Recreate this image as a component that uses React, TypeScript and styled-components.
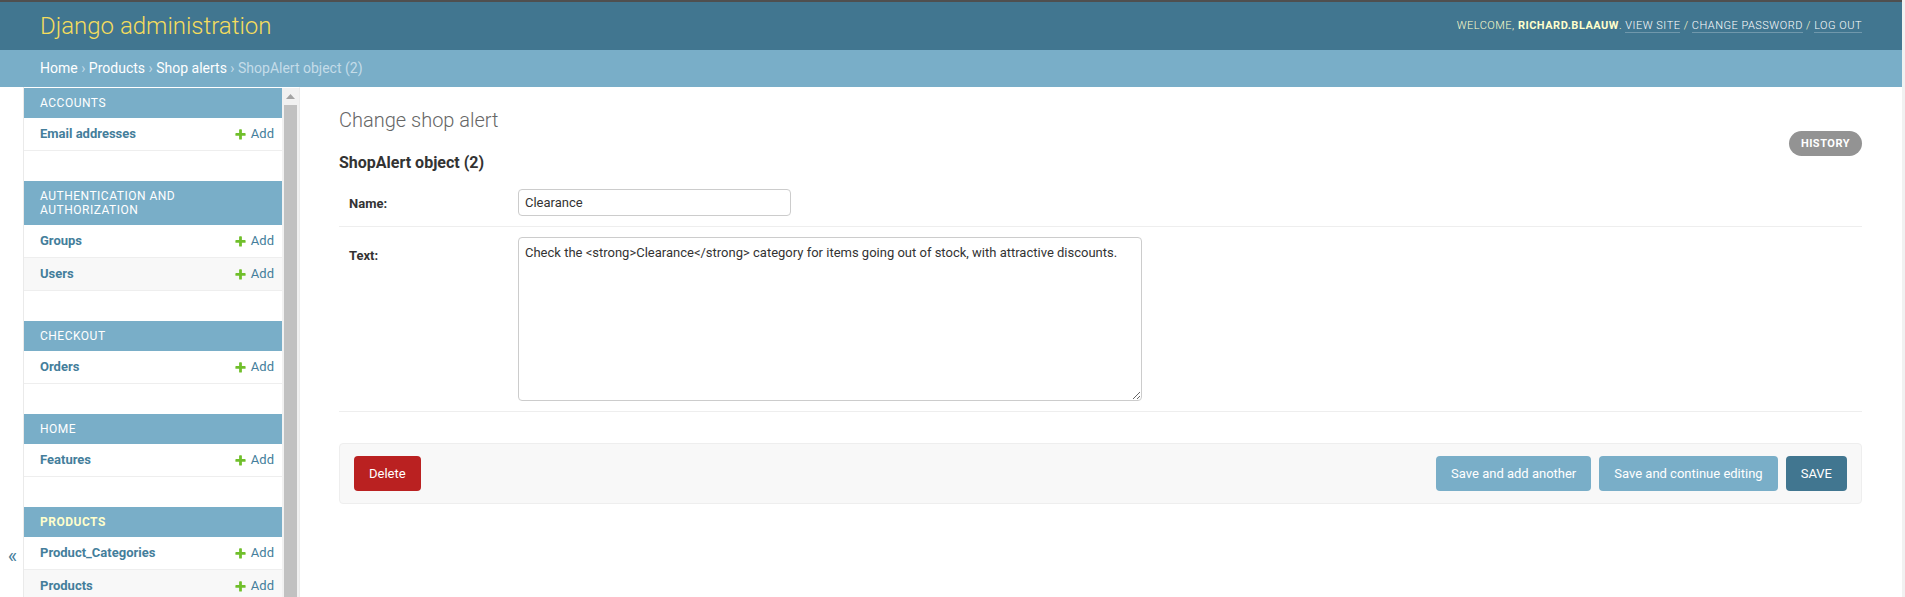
import React from "react";
import styled, { createGlobalStyle } from "styled-components";

const GlobalStyle = createGlobalStyle`
  html, body {
    margin: 0;
    padding: 0;
  }
  body {
    font-family: Roboto, "Liberation Sans", Arial, sans-serif;
    color: #333;
    background: #fff;
    font-size: 14px;
    overflow: hidden;
  }
  * {
    box-sizing: border-box;
  }
`;

const Page = styled.div`
  height: 597px;
  overflow: hidden;
  border-right: 3px solid #f1f1f1;
`;

const Header = styled.div`
  height: 50px;
  border-top: 2px solid #4f4f4f;
  background: #417690;
  padding: 0 40px;
  display: flex;
  align-items: center;
  justify-content: space-between;
`;

const Branding = styled.h1`
  margin: 0;
  font-size: 24px;
  line-height: 30px;
  font-weight: 300;
  color: #f5dd5d;
`;

const UserTools = styled.div`
  font-size: 11px;
  letter-spacing: 0.5px;
  text-transform: uppercase;
  font-weight: 300;
  color: #ffc;
  margin-top: -2px;

  strong {
    font-weight: 700;
  }
`;

const ToolLink = styled.a`
  color: #fff;
  text-decoration: none;
  border-bottom: 1px solid rgba(255, 255, 255, 0.25);
`;

const Breadcrumbs = styled.div`
  background: #79aec8;
  padding: 10px 40px;
  color: #c4dce8;
  font-size: 14px;
  line-height: 17px;
`;

const Crumb = styled.a`
  color: #fff;
  text-decoration: none;
`;

const Main = styled.div`
  display: flex;
  height: 938px;
`;

const Toggle = styled.div`
  flex: 0 0 24px;
  border-right: 1px solid #eaeaea;
  display: flex;
  align-items: center;
  justify-content: center;
  font-size: 20px;
  color: #447e9b;
  padding-left: 2px;
`;

const NavSidebar = styled.div`
  flex: 0 0 276px;
  border-top: 1px solid transparent;
  border-right: 1px solid #eaeaea;
  display: flex;
  overflow: hidden;
`;

const NavList = styled.div`
  flex: 0 0 258px;
  overflow: hidden;
`;

const ScrollTrack = styled.div`
  flex: 0 0 17px;
  background: #f1f1f1;
  display: flex;
  flex-direction: column;
  align-items: center;
`;

const ScrollArrow = styled.div`
  height: 17px;
  display: flex;
  align-items: center;
  justify-content: center;
`;

const ScrollThumb = styled.div`
  width: 13px;
  height: 760px;
  background: #c1c1c1;
`;

const Module = styled.div`
  margin-bottom: 30px;
`;

const Caption = styled.div<{ $current?: boolean }>`
  background: #79aec8;
  padding: 8px 16px;
  font-size: 12px;
  line-height: 14px;
  letter-spacing: 0.5px;
  text-transform: uppercase;
  color: ${(p) => (p.$current ? "#ffc" : "#fff")};
  font-weight: ${(p) => (p.$current ? 700 : 400)};
`;

const ModelRow = styled.div<{ $alt?: boolean }>`
  display: flex;
  justify-content: space-between;
  align-items: center;
  padding: 8px 8px 8px 16px;
  line-height: 16px;
  font-size: 13px;
  border-bottom: 1px solid #eee;
  background: ${(p) => (p.$alt ? "#f8f8f8" : "#fff")};
`;

const ModelName = styled.a`
  color: #447e9b;
  font-weight: 700;
  text-decoration: none;
`;

const AddLink = styled.a`
  color: #447e9b;
  text-decoration: none;
  display: flex;
  align-items: center;
  gap: 4px;
`;

const Content = styled.div`
  flex: 1;
  min-width: 0;
  padding: 20px 40px 20px 39px;
`;

const TitleBar = styled.div`
  display: flex;
  justify-content: space-between;
  align-items: flex-start;
`;

const Title = styled.h1`
  margin: 0 0 20px;
  font-size: 20px;
  line-height: 26px;
  font-weight: 300;
  color: #666;
`;

const Subtitle = styled.h2`
  margin: 0 0 6px;
  font-size: 16px;
  line-height: 20px;
  font-weight: 700;
  color: #333;
`;

const HistoryButton = styled.a`
  margin-top: 24px;
  display: block;
  height: 25px;
  line-height: 25px;
  padding: 0 12px;
  border-radius: 15px;
  background: #939393;
  color: #fff;
  font-size: 11px;
  font-weight: 700;
  letter-spacing: 0.5px;
  text-transform: uppercase;
  text-decoration: none;
`;

const FormRow = styled.div`
  display: grid;
  grid-template-columns: 169px 1fr;
  align-items: start;
  padding: 10px;
  border-bottom: 1px solid #eee;
  font-size: 13px;
`;

const Label = styled.label<{ $top?: number }>`
  padding-top: ${(p) => p.$top ?? 7}px;
  line-height: 16px;
  font-weight: 700;
  color: #333;
`;

const TextInput = styled.input`
  width: 273px;
  height: 27px;
  margin: 0;
  padding: 5px 6px;
  border: 1px solid #ccc;
  border-radius: 4px;
  font-family: inherit;
  font-size: 13px;
  color: #333;
  outline: none;
`;

const TextArea = styled.textarea`
  width: 624px;
  height: 164px;
  margin: 0;
  padding: 7px 6px 5px;
  border: 1px solid #ccc;
  border-radius: 4px;
  font-family: inherit;
  font-size: 13px;
  line-height: 16px;
  color: #333;
  outline: none;
  vertical-align: top;
`;

const SubmitRow = styled.div`
  margin-top: 31px;
  display: flex;
  align-items: center;
  gap: 8px;
  padding: 12px 14px;
  background: #f8f8f8;
  border: 1px solid #eee;
  border-radius: 4px;
`;

const ActionButton = styled.a<{ $bg: string; $push?: boolean }>`
  display: block;
  height: 35px;
  line-height: 35px;
  padding: 0 15px;
  border-radius: 4px;
  background: ${(p) => p.$bg};
  color: #fff;
  font-size: 13px;
  text-decoration: none;
  margin-right: ${(p) => (p.$push ? "auto" : "0")};
`;

const PlusIcon = () => (
  <svg width="13" height="13" viewBox="0 0 1792 1792">
    <path
      fill="#70bf2b"
      d="M1600 796v192q0 40-28 68t-68 28h-416v416q0 40-28 68t-68 28h-192q-40 0-68-28t-28-68v-416h-416q-40 0-68-28t-28-68v-192q0-40 28-68t68-28h416v-416q0-40 28-68t68-28h192q40 0 68 28t28 68v416h416q40 0 68 28t28 68z"
    />
  </svg>
);

const sections = [
  { name: "Accounts", models: ["Email addresses"] },
  { name: "Authentication and Authorization", models: ["Groups", "Users"] },
  { name: "Checkout", models: ["Orders"] },
  { name: "Home", models: ["Features"] },
  {
    name: "Products",
    models: ["Product_Categories", "Products", "Shop alerts"],
    current: true,
  },
];

export default function App() {
  return (
    <Page>
      <GlobalStyle />
      <Header>
        <Branding>Django administration</Branding>
        <UserTools>
          Welcome, <strong>richard.blaauw</strong>.{" "}
          <ToolLink href="#">View site</ToolLink> /{" "}
          <ToolLink href="#">Change password</ToolLink> /{" "}
          <ToolLink href="#">Log out</ToolLink>
        </UserTools>
      </Header>
      <Breadcrumbs>
        <Crumb href="#">Home</Crumb> › <Crumb href="#">Products</Crumb> ›{" "}
        <Crumb href="#">Shop alerts</Crumb> › ShopAlert object (2)
      </Breadcrumbs>
      <Main>
        <Toggle>«</Toggle>
        <NavSidebar>
          <NavList>
            {sections.map((s) => (
              <Module key={s.name}>
                <Caption $current={s.current}>{s.name}</Caption>
                {s.models.map((m, i) => (
                  <ModelRow key={m} $alt={i % 2 === 1}>
                    <ModelName href="#">{m}</ModelName>
                    <AddLink href="#">
                      <PlusIcon />
                      Add
                    </AddLink>
                  </ModelRow>
                ))}
              </Module>
            ))}
          </NavList>
          <ScrollTrack>
            <ScrollArrow>
              <svg width="9" height="5" viewBox="0 0 9 5">
                <path d="M0 5 L4.5 0 L9 5 Z" fill="#a3a3a3" />
              </svg>
            </ScrollArrow>
            <ScrollThumb />
          </ScrollTrack>
        </NavSidebar>
        <Content>
          <TitleBar>
            <div>
              <Title>Change shop alert</Title>
              <Subtitle>ShopAlert object (2)</Subtitle>
            </div>
            <HistoryButton href="#">History</HistoryButton>
          </TitleBar>
          <FormRow>
            <Label>Name:</Label>
            <div>
              <TextInput type="text" defaultValue="Clearance" />
            </div>
          </FormRow>
          <FormRow>
            <Label $top={11}>Text:</Label>
            <div>
              <TextArea defaultValue="Check the <strong>Clearance</strong> category for items going out of stock, with attractive discounts." />
            </div>
          </FormRow>
          <SubmitRow>
            <ActionButton href="#" $bg="#ba2121" $push>
              Delete
            </ActionButton>
            <ActionButton href="#" $bg="#79aec8">
              Save and add another
            </ActionButton>
            <ActionButton href="#" $bg="#79aec8">
              Save and continue editing
            </ActionButton>
            <ActionButton href="#" $bg="#417690">
              SAVE
            </ActionButton>
          </SubmitRow>
        </Content>
      </Main>
    </Page>
  );
}
